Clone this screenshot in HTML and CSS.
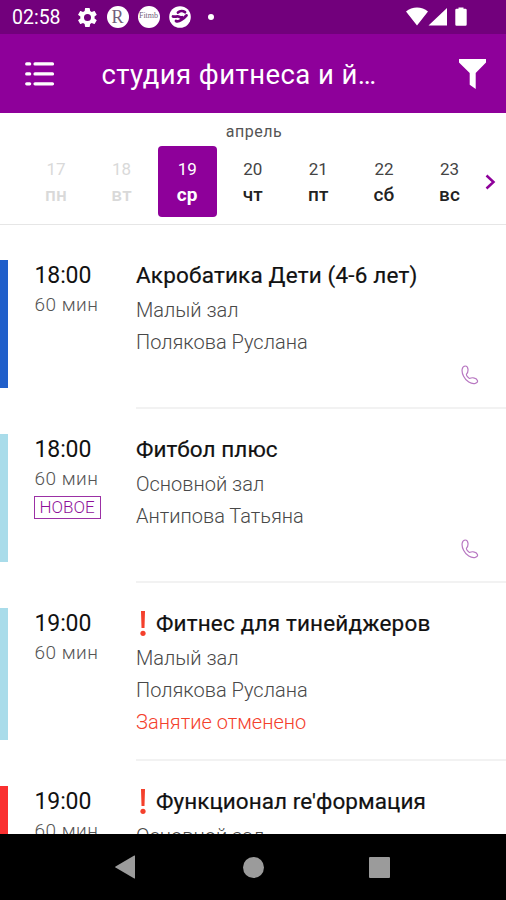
FILE: index.html
```html
<!DOCTYPE html>
<html lang="ru">
<head>
<meta charset="utf-8">
<title>Расписание</title>
<link rel="stylesheet" href="styles.css">
</head>
<body>
<div class="app">
  <div class="status">
    <span class="clock">02:58</span>
    <svg class="gear" viewBox="2 2 20 20" width="19" height="19"><path fill="#fff" fill-rule="evenodd" d="M19.4 13a7.500 7.500 0 0 0 0-2l2.100-1.600c.2-.2.2-.4.1-.6l-2-3.500c-.1-.2-.4-.3-.6-.2l-2.500 1a7 7 0 0 0-1.700-1L14.400 2.400a.5.5 0 0 0-.5-.4h-4c-.2 0-.4.2-.5.400L9 5.100a8 8 0 0 0-1.700 1l-2.500-1c-.2-.1-.5 0-.6.200l-2 3.500c-.1.200 0 .5.100.600L4.500 11a8 8 0 0 0 0 2l-2.200 1.600c-.1.200-.2.400-.1.600l2 3.500c.1.200.4.300.6.200l2.500-1a7 7 0 0 0 1.700 1l.4 2.700c.1.200.3.400.5.400h4c.3 0 .5-.2.500-.4l.4-2.700a8 8 0 0 0 1.700-1l2.500 1c.2.100.5 0 .6-.2l2-3.500c.1-.2.1-.5-.1-.6zM12 8.300a3.700 3.700 0 1 1 0 7.400 3.700 3.700 0 0 1 0-7.400z"/></svg>
    <span class="disc disc-r">R</span>
    <span class="disc disc-f">Fitmb</span>
    <svg class="swirl" viewBox="0 0 22 22" width="22" height="22"><circle cx="11" cy="11" r="10.800" fill="#fff"/><path d="M4 10.500c2 .8 3.500-.6 5.500 0 1.500.5 2 1.200 3.500.8M9 6.500c2-1.800 5-1.800 7-.3M17.500 9.500c-1 .5-2 2.500-4 3.500-2 1.200-4 3.500-6.500 2" fill="none" stroke="#72007c" stroke-width="2.800" stroke-linecap="round"/></svg>
    <span class="dot"></span>
    <svg class="signals" viewBox="0 0 64 20" width="64" height="20"><path fill="#fff" d="M0 4.500C6-.9 16-.9 22 4.500L11 18.500zM41 1v17.500H22.500zM52.500 1.800V.4h5v1.400h2q1.200 0 1.200 1.200v14.500q0 1.200-1.200 1.200h-9q-1.200 0-1.200-1.200V3q0-1.200 1.200-1.200z"/></svg>
  </div>
  <header class="toolbar">
    <svg class="menu" viewBox="0 0 30 24" width="30" height="24"><path d="M1.700 1.900h3M10 1.900h17.500M1.700 11.900h3M10 11.900h17.500M1.700 21.800h3M10 21.800h17.500" stroke="#fff" stroke-width="3.200" stroke-linecap="round"/></svg>
    <h1 class="heading">студия фитнеса и й…</h1>
    <svg class="funnel" viewBox="0 0 27 30" width="27" height="30"><path fill="#fff" d="M0 0h27v3.500L16.700 14v16l-6-4.200V14L0 3.500z"/></svg>
  </header>
  <section class="calendar">
    <div class="month">апрель</div>
    <div class="days">
      <div class="day past"><span>17</span><b>пн</b></div>
      <div class="day past"><span>18</span><b>вт</b></div>
      <div class="day selected"><span>19</span><b>ср</b></div>
      <div class="day"><span>20</span><b>чт</b></div>
      <div class="day"><span>21</span><b>пт</b></div>
      <div class="day"><span>22</span><b>сб</b></div>
      <div class="day"><span>23</span><b>вс</b></div>
      <svg class="next" viewBox="0 0 11 16" width="11" height="16"><path d="M1.500 1.500L8.500 8l-7 6.500" fill="none" stroke="#8e009a" stroke-width="2.500"/></svg>
    </div>
  </section>
  <main class="list">
    <article class="lesson">
      <div class="stripe blue"></div>
      <div class="when"><div class="time">18:00</div><div class="length">60 мин</div></div>
      <div class="info">
        <h2><span class="name wide">Акробатика Дети (4-6 лет)</span></h2>
        <p>Малый зал</p><p>Полякова Руслана</p>
        <svg class="phone" viewBox="0 0 18 20" width="18" height="20"><path d="M5.500 9.200C7.700 7 7.700 1 4.300 1 1 1-.1 6.200 2.600 11.200 5.100 16.300 10 19.300 14.300 18.400 18.300 17.300 16.500 13.700 12.600 12.900 10 12.300 9 13.500 8.500 13.500 7.500 13.200 5 10.500 5.500 9.200z" fill="none" stroke="#b878c2" stroke-width="1.200"/></svg>
      </div>
    </article>
    <article class="lesson">
      <div class="stripe sky"></div>
      <div class="when"><div class="time">18:00</div><div class="length">60 мин</div><div class="badge">НОВОЕ</div></div>
      <div class="info">
        <h2><span class="name">Фитбол плюс</span></h2>
        <p>Основной зал</p><p>Антипова Татьяна</p>
        <svg class="phone" viewBox="0 0 18 20" width="18" height="20"><path d="M5.500 9.200C7.700 7 7.700 1 4.300 1 1 1-.1 6.200 2.600 11.200 5.100 16.300 10 19.300 14.300 18.400 18.300 17.300 16.500 13.700 12.600 12.900 10 12.300 9 13.500 8.500 13.500 7.500 13.200 5 10.500 5.500 9.200z" fill="none" stroke="#b878c2" stroke-width="1.200"/></svg>
      </div>
    </article>
    <article class="lesson cancelled">
      <div class="stripe sky"></div>
      <div class="when"><div class="time">19:00</div><div class="length">60 мин</div></div>
      <div class="info">
        <h2><svg class="alert" viewBox="0 0 6 25" width="6" height="25"><path fill="#f4402c" d="M1 0h4l-.5 17h-3z"/><circle cx="3" cy="22.300" r="2.600" fill="#f4402c"/></svg><span class="name wide">Фитнес для тинейджеров</span></h2>
        <p>Малый зал</p><p>Полякова Руслана</p><p class="notice">Занятие отменено</p>
      </div>
    </article>
    <article class="lesson">
      <div class="stripe red"></div>
      <div class="when"><div class="time">19:00</div><div class="length">60 мин</div></div>
      <div class="info">
        <h2><svg class="alert" viewBox="0 0 6 25" width="6" height="25"><path fill="#f4402c" d="M1 0h4l-.5 17h-3z"/><circle cx="3" cy="22.300" r="2.600" fill="#f4402c"/></svg><span class="name">Функционал re'формация</span></h2>
        <p>Основной зал</p>
      </div>
    </article>
  </main>
  <nav class="system">
    <svg viewBox="0 0 21 24" width="21" height="24"><path fill="#9b9b9b" d="M20 .8v22.400q0 .6-.7.3L.5 12.500q-.7-.5 0-1L19.300.5q.7-.3.7.3z"/></svg>
    <span class="home"></span>
    <span class="recent"></span>
  </nav>
</div>
</body>
</html>
```
FILE: styles.css
```css
* { box-sizing: border-box; }
body { margin: 0; font-family: Roboto, "Noto Sans", sans-serif; background: #fff; }
h1, h2, p { margin: 0; font-weight: 400; }
svg { display: block; flex: none; }
.app { width: 506px; height: 900px; overflow: hidden; display: flex; flex-direction: column; }

.status { height: 34px; flex: none; background: #72007c; display: flex; align-items: center; padding: 0 37px 0 12px; color: #fff; }
.clock { font-size: 19.500px; width: 65.500px; line-height: 34px; padding-top: 2px; }
.gear { margin-right: 10px; }
.disc { width: 22px; height: 22px; border-radius: 50%; background: #fff; color: #72607c; text-align: center; margin-right: 9px; overflow: hidden; }
.disc-r { font: 18px/22px "Liberation Serif", serif; }
.disc-f { font: 8px/20px "Liberation Serif", serif; }
.dot { width: 6px; height: 6px; border-radius: 50%; background: #fff; margin-left: 17px; }
.signals { margin-left: auto; margin-right: -1px; }

.toolbar { height: 79px; flex: none; background: #8e009a; display: flex; align-items: center; padding: 0 20px 0 25px; color: #fff; }
.heading { margin-left: 46.500px; font-size: 27.500px; line-height: 40px; padding-top: 2px; white-space: nowrap; letter-spacing: 0.42px; }
.funnel { margin-left: auto; }

.calendar { height: 112px; flex: none; border-bottom: 1px solid #e6e6e6; }
.month { text-align: center; font-size: 16px; line-height: 19px; padding-top: 9px; height: 33px; color: #555; letter-spacing: 0.5px; padding-left: 2px; }
.days { display: flex; padding-left: 26.500px; align-items: flex-start; }
.day { width: 59px; height: 71px; margin-right: 6.600px; border-radius: 4px; flex: none; display: flex; flex-direction: column; align-items: center; padding-top: 11px; color: #444; font-size: 17px; line-height: 25px; }
.day b { font-size: 19px; line-height: 25px; font-weight: 500; color: #222; letter-spacing: 0.2px; }
.day.past, .day.past b { color: #d9d9d9; }
.day.selected { background: #8e009a; color: #fff; }
.day.selected b { color: #fff; font-weight: 700; }
.next { margin: 28px 0 0 -1px; }

.list { flex: 1; overflow: hidden; padding-top: 10px; }
.lesson { height: 174px; display: flex; }
.lesson.cancelled { height: 178px; }
.stripe { width: 7.500px; margin: 24.500px 0 21.500px; flex: none; }
.blue { background: #205fca; }
.sky { background: #a9dcea; }
.red { background: #fa3030; }
.when { width: 128.500px; padding: 26px 0 0 27px; flex: none; }
.time { font-size: 23px; line-height: 30px; color: #111; letter-spacing: -0.1px; }
.length { font-size: 19px; line-height: 27px; color: #555; font-weight: 300; letter-spacing: 0.5px; }
.badge { width: 67px; height: 23px; margin-top: 4px; border: 1.500px solid #9b30a5; font-size: 17px; line-height: 21px; text-align: center; color: #8e109a; font-weight: 300; margin-left: -1px; }
.info { flex: 1; padding-top: 25px; border-bottom: 2px solid #f2f2f2; position: relative; }
h2 { display: flex; align-items: center; font-size: 22.500px; line-height: 30px; height: 30px; color: #111; white-space: nowrap; margin-bottom: 4px; }
.name { letter-spacing: 0.06px; -webkit-text-stroke: 0.2px #111; }
.name.wide { letter-spacing: 0.18px; }
.alert { margin: 0 10px 0 4px; }
.info p { font-size: 20px; line-height: 32px; color: #484848; font-weight: 300; }
.info .notice { color: #f4402c; }
.phone { position: absolute; right: 27px; bottom: 22px; }

.system { height: 66px; flex: none; background: #000; display: flex; align-items: center; padding-left: 115px; }
.home { width: 21px; height: 21px; border-radius: 50%; background: #9b9b9b; margin-left: 107px; }
.recent { width: 21px; height: 21px; border-radius: 1px; background: #9b9b9b; margin-left: 105px; }
```
